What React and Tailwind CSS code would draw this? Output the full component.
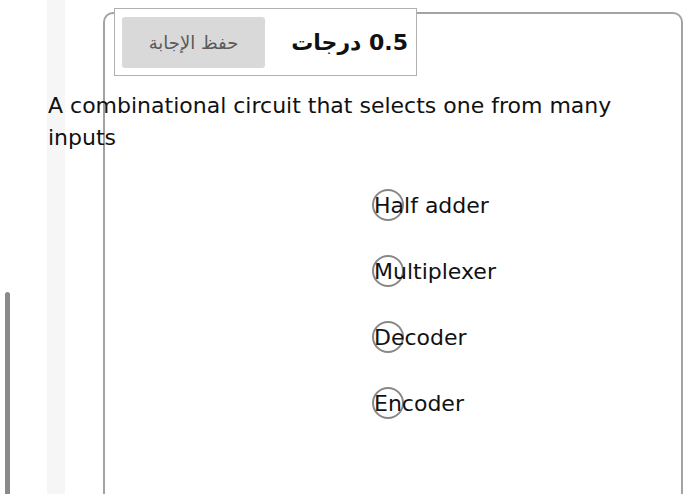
const OPTIONS = ["Half adder", "Multiplexer", "Decoder", "Encoder"];

export default function App() {
  return (
    <div className="flex h-[494px] w-[700px] overflow-hidden bg-white font-['DejaVu_Sans',sans-serif] text-[#111]">
      <aside className="flex w-[47px] shrink-0 items-end pl-[5px]">
        <div className="h-[202px] w-[5px] rounded-t-sm bg-[#8a8a8a]" />
      </aside>

      <main className="flex-1 bg-[linear-gradient(to_right,#f6f6f6_18px,#ffffff_18px)] pt-[12px]">
        <section className="ml-[56px] h-[520px] w-[580px] rounded-[10px] border-2 border-[#a3a3a3]">
          <header className="-mt-[6px] ml-[9px] flex h-[68px] w-[303px] items-center justify-between border border-[#b0b0b0] bg-white pl-[7px] pr-[8px]">
            <button
              type="button"
              className="h-[51px] w-[143px] rounded-[3px] bg-[#d9d9d9] text-[18px] text-[#5a5a5a]"
            >
              حفظ الإجابة
            </button>
            <h2 dir="rtl" className="text-[22px] font-bold">
              0.5 درجات
            </h2>
          </header>

          <p className="-ml-[57px] mt-[14px] w-[590px] text-[22px] leading-[32px]">
            A combinational circuit that selects one from many inputs
          </p>

          <ul className="ml-[267px] mt-[18px] flex flex-col">
            {OPTIONS.map((opt) => (
              <li key={opt} className="flex h-[66px] items-center text-[22px]">
                <span className="h-[32px] w-[32px] shrink-0 rounded-full border-2 border-[#888]" />
                <span className="-ml-[30px]">{opt}</span>
              </li>
            ))}
          </ul>
        </section>
      </main>
    </div>
  );
}
